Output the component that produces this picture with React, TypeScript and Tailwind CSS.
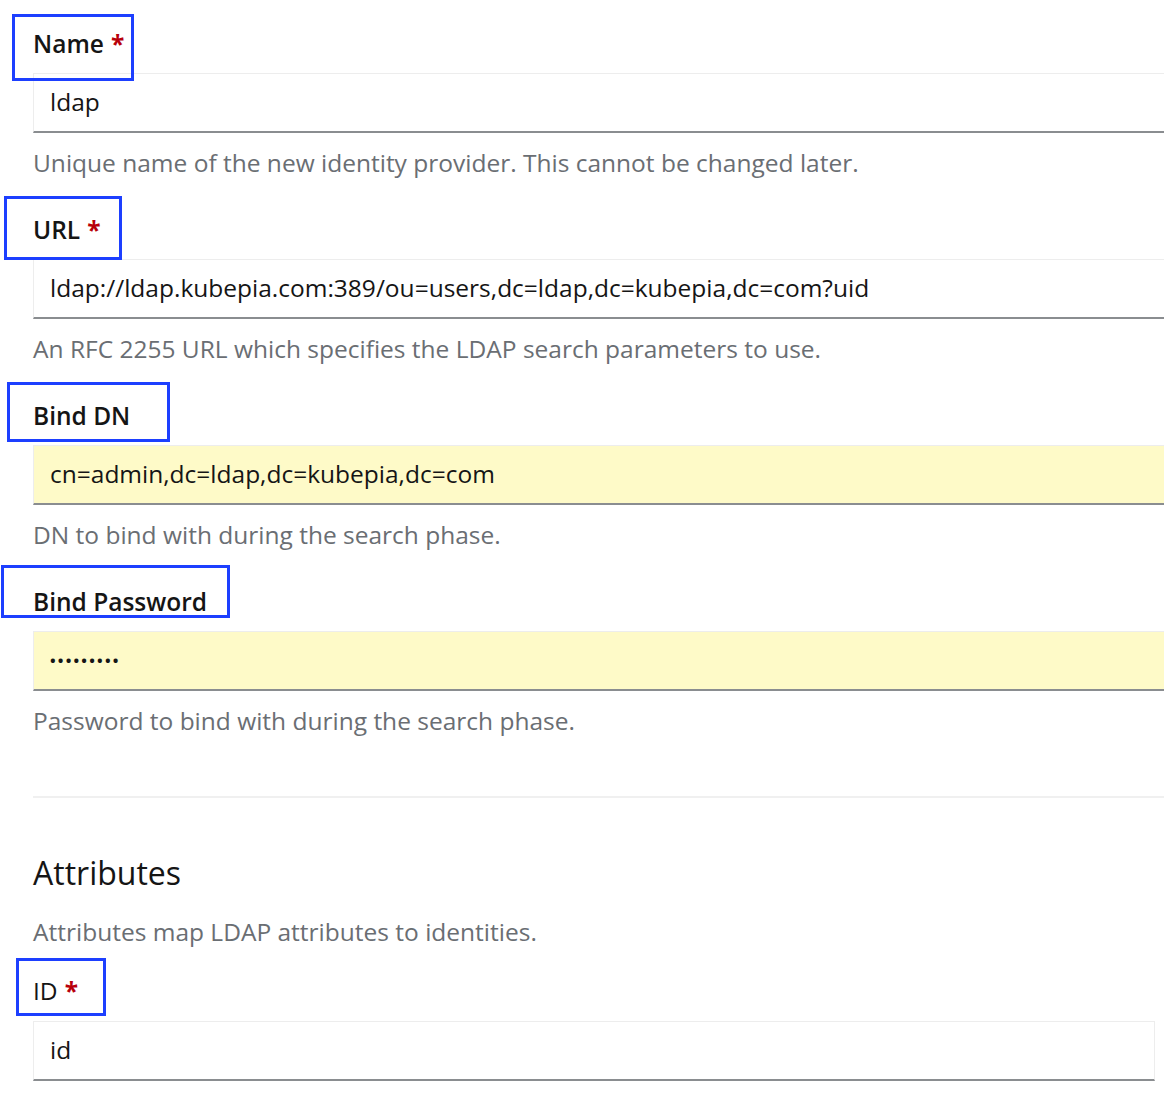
import React from 'react';

type FieldProps = {
  label: string;
  required?: boolean;
  value: string;
  helper: string;
  box: string;
  autofill?: boolean;
  password?: boolean;
};

function Field({ label, required, value, helper, box, autofill, password }: FieldProps) {
  return (
    <div className="flex flex-col">
      <div className="relative h-[30px] flex items-center">
        <span className="text-[24.5px] leading-[30px] font-semibold text-[#151515]">
          {label}
          {required && <span className="ml-[7px] font-bold text-[#b8000b]">*</span>}
        </span>
        {/* annotation box drawn over the label */}
        <div className={`absolute z-10 border-[3px] border-[#1d3fff] pointer-events-none ${box}`} />
      </div>
      <div
        className={`mt-[14px] h-[60px] w-[1140px] flex items-center pl-[16px] border border-[#ededed] border-b-2 border-b-[#8a8d90] ${
          autofill ? 'bg-[#fefac8]' : 'bg-white'
        }`}
      >
        {password ? (
          <span className="text-[15px] leading-none tracking-[2.2px] font-bold text-[#151515]">•••••••••</span>
        ) : (
          <span className="text-[24.5px] text-[#151515]">{value}</span>
        )}
      </div>
      <p className="mt-[15px] text-[24.5px] leading-[30px] text-[#6a6e73]">{helper}</p>
    </div>
  );
}

export default function App() {
  return (
    <div
      className="w-[1164px] h-[1096px] overflow-hidden bg-white pl-[33px] pt-[29px]"
      style={{ fontFamily: '"Open Sans", "Noto Sans", sans-serif' }}
    >
      <div className="flex flex-col gap-[37px]">
        <Field
          label="Name"
          required
          value="ldap"
          helper="Unique name of the new identity provider. This cannot be changed later."
          box="left-[-21px] top-[-15px] w-[122px] h-[67px]"
        />
        <Field
          label="URL"
          required
          value="ldap://ldap.kubepia.com:389/ou=users,dc=ldap,dc=kubepia,dc=com?uid"
          helper="An RFC 2255 URL which specifies the LDAP search parameters to use."
          box="left-[-29px] top-[-19px] w-[118px] h-[64px]"
        />
        <Field
          label="Bind DN"
          value="cn=admin,dc=ldap,dc=kubepia,dc=com"
          helper="DN to bind with during the search phase."
          box="left-[-26px] top-[-19px] w-[163px] h-[60px]"
          autofill
        />
        <Field
          label="Bind Password"
          value=""
          helper="Password to bind with during the search phase."
          box="left-[-32px] top-[-22px] w-[229px] h-[53px]"
          autofill
          password
        />
      </div>

      <div className="mt-[60px] w-[1140px] border-t-2 border-[#f0f0f0]" />

      <h2 className="mt-[57px] text-[32px] leading-[36px] text-[#151515]">Attributes</h2>
      <p className="mt-[26px] text-[24.5px] leading-[30px] text-[#6a6e73]">
        Attributes map LDAP attributes to identities.
      </p>

      <div className="mt-[29px] flex flex-col">
        <div className="relative h-[30px] flex items-center">
          <span className="text-[24.5px] leading-[30px] text-[#151515]">
            ID<span className="ml-[7px] font-bold text-[#b8000b]">*</span>
          </span>
          <div className="absolute z-10 left-[-17px] top-[-18px] w-[90px] h-[58px] border-[3px] border-[#1d3fff] pointer-events-none" />
        </div>
        <div className="mt-[15px] h-[60px] w-[1122px] flex items-center pl-[16px] bg-white border border-[#ededed] border-b-2 border-b-[#8a8d90]">
          <span className="text-[24.5px] text-[#151515]">id</span>
        </div>
      </div>
    </div>
  );
}
